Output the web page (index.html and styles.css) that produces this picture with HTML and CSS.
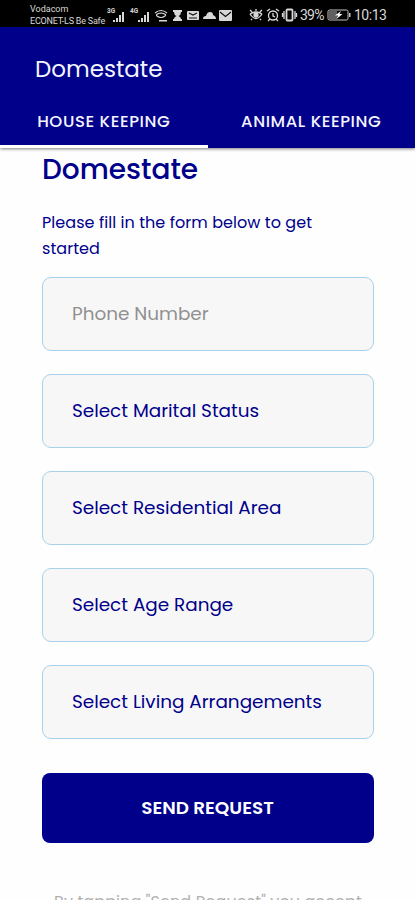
FILE: index.html
```html
<!DOCTYPE html>
<html lang="en">
<head>
    <meta charset="UTF-8">
    <meta name="viewport" content="width=device-width, initial-scale=1.0">
    <title>Domestate</title>
    <link rel="stylesheet" href="styles.css">
</head>
<body>
    <div class="status-bar">
        <div class="carriers">
            <span class="carrier-one">Vodacom</span>
            <span class="carrier-two">ECONET-LS Be Safe</span>
        </div>
        <svg class="status-icons" width="125" height="18" viewBox="0 0 125 18" fill="#d8d8d8">
            <!-- signal 1 -->
            <text x="0" y="6.500" font-size="6.500" font-weight="700">3G</text>
            <path d="M6 16v-2h2v2zM9 16v-4h2v4zM12 16V9h2v7zM15 16V6h2v10z"/>
            <!-- signal 2 -->
            <text x="23" y="6.500" font-size="6.500" font-weight="700">4G</text>
            <path d="M31 16v-2h2v2zM34 16v-4h2v4zM37 16V9h2v7zM40 16V6h2v10z"/>
            <!-- wifi -->
            <path d="M48 7q6-5 12 0M50 10q-2-2 4-3 6 1 4 3-4 3-8 0" fill="none" stroke="#d8d8d8" stroke-width="1.200"/>
            <path d="M52 14h8v1.500h-8z"/>
            <!-- hourglass -->
            <path d="M66 4h9v2h-1q0 3-2.500 4 2.500 1 2.500 3h1v2h-9v-2h1q0-2 2.500-3Q67 9 67 6h-1z"/>
            <!-- mail -->
            <rect x="80" y="5" width="12" height="9" rx="1"/>
            <path d="M82 7l4 2 4-2M82 12h8" fill="none" stroke="#111" stroke-width="1.200"/>
            <!-- cloud -->
            <path d="M96 13q0-3 3-3 1-4 4-4 3 0 3 3 3 1 3 4z"/>
            <!-- mail 2 -->
            <rect x="112" y="4" width="13" height="11" rx="1"/>
            <path d="M113 6l5.500 4.500L124 6" fill="none" stroke="#111" stroke-width="1.200"/>
        </svg>
        <svg class="system-icons" width="49" height="16" viewBox="0 0 49 16" fill="none" stroke="#d8d8d8" stroke-width="1.300">
            <!-- eye -->
            <path d="M1 7q6 9 12 0M1 7q6-4 12 0M3 5L1 3M7 4V2M11 5l2-2M3 12l-1 1M11 12l1 1"/>
            <circle cx="7" cy="8" r="2" fill="#d8d8d8"/>
            <!-- alarm -->
            <circle cx="24" cy="8.500" r="4.500"/>
            <path d="M24 6v3l2 1M18 4l3-2M30 4l-3-2M21 12l-2 2M27 12l2 2"/>
            <!-- vibrate -->
            <rect x="37.500" y="2.500" width="6" height="11" rx="1" stroke-width="1.800"/>
            <path d="M35 4v8M46 4v8M33.500 6v4M47.500 6v4"/>
        </svg>
        <span class="percent">39%</span>
        <svg class="battery" width="24" height="12" viewBox="0 0 24 12">
            <rect x="1" y="1" width="20" height="10" rx="1.500" fill="none" stroke="#c4c4c4"/>
            <rect x="2" y="2" width="8" height="8" fill="#606060"/>
            <path d="M14 2L8 6.500h3L9.500 10l6-5h-3z" fill="#fff"/>
            <path d="M22 4h1.500v4H22z" fill="#c4c4c4"/>
        </svg>
        <span class="time">10:13</span>
    </div>

    <header class="app-bar">
        <h1 class="app-title">Domestate</h1>
        <nav class="tabs">
            <a class="tab tab-active">HOUSE KEEPING</a>
            <a class="tab">ANIMAL KEEPING</a>
        </nav>
    </header>

    <main class="main">
        <h2 class="form-title">Domestate</h2>
        <p class="intro">Please fill in the form below to get<br>started</p>
        <form class="form">
            <div class="field placeholder">Phone Number</div>
            <div class="field">Select Marital Status</div>
            <div class="field">Select Residential Area</div>
            <div class="field">Select Age Range</div>
            <div class="field">Select Living Arrangements</div>
            <button type="button" class="send">SEND REQUEST</button>
        </form>
        <p class="terms">By tapping "Send Request" you accept</p>
    </main>
</body>
</html>
```

FILE: styles.css
```css
* {
    box-sizing: border-box;
}

body {
    margin: 0;
    height: 900px;
    overflow: hidden;
    background-color: #fefefe;
    color: #00008b;
    font-family: Poppins, Inter, sans-serif;
}

/* Status bar */
.status-bar {
    display: flex;
    align-items: center;
    height: 27px;
    padding: 2px 0 0 30px;
    background-color: #000;
    color: #d8d8d8;
    font-family: Roboto, sans-serif;
}

.carriers {
    display: flex;
    flex-direction: column;
    width: 77px;
    font-size: 9px;
    line-height: 12px;
    white-space: nowrap;
}

.carrier-two {
    letter-spacing: -0.22px;
}

.system-icons {
    margin-left: 17px;
}

.percent {
    width: 28px;
    margin-left: 2px;
    font-size: 14px;
    letter-spacing: -0.8px;
}

.battery {
    margin-left: -1px;
}

.time {
    margin-left: 3px;
    font-size: 14px;
    letter-spacing: -0.5px;
}

/* App bar with tabs */
.app-bar {
    height: 121px;
    background-color: #00008b;
    color: #f4f4ff;
    box-shadow: 0 1px 3px rgba(0, 0, 0, 0.5);
}

.app-title {
    margin: 0;
    padding: 22px 0 0 35px;
    font-size: 23px;
    font-weight: 400;
    line-height: 40px;
}

.tabs {
    display: flex;
    height: 59px;
}

.tab {
    width: 50%;
    padding-top: 4px;
    border-bottom: 3px solid transparent;
    font-size: 16.5px;
    font-weight: 500;
    letter-spacing: 0.6px;
    line-height: 57px;
    text-align: center;
}

.tab-active {
    border-bottom-color: #fff;
}

/* Form */
.main {
    padding: 0 41px 0 42px;
}

.form-title {
    margin: 0;
    padding-top: 2px;
    font-size: 28px;
    font-weight: 500;
    line-height: 40px;
}

.intro {
    margin: 20px 0 15px;
    font-size: 16px;
    letter-spacing: 0.06px;
    line-height: 26px;
}

.form {
    display: flex;
    flex-direction: column;
    gap: 23px;
}

.field {
    height: 74px;
    padding-left: 29px;
    border: 1.5px solid #a9d2ea;
    border-radius: 9px;
    background-color: #f7f7f7;
    font-size: 18.4px;
    line-height: 72px;
}

.placeholder {
    color: #909090;
}

.send {
    height: 70px;
    margin-top: 11px;
    padding: 0 1px 2px 0;
    border: none;
    border-radius: 8px;
    background-color: #00008b;
    color: #fff;
    font: inherit;
    font-size: 18.4px;
    font-weight: 600;
}

.terms {
    margin: 47px 0 0 12px;
    color: #b0b0b0;
    font-size: 16px;
    letter-spacing: 0.1px;
    line-height: 24px;
    white-space: nowrap;
}
```
